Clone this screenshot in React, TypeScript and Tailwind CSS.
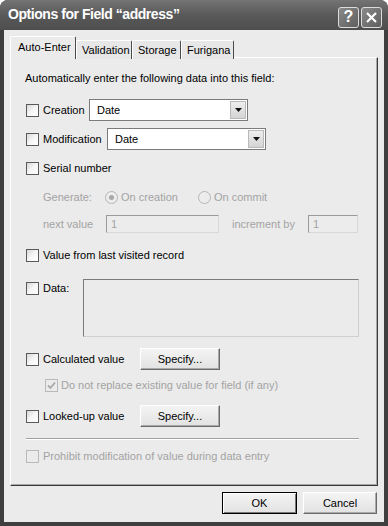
import React from "react";

const F = { fontFamily: '"Liberation Sans", Arial, sans-serif' };

function Check({ disabled = false, checked = false }: { disabled?: boolean; checked?: boolean }) {
  return (
    <div
      className={
        "w-[13px] h-[13px] shrink-0 border flex items-center justify-center " +
        (disabled
          ? "border-[#b9b9b9] bg-[#ebebeb]"
          : "border-[#5a5a5a] bg-gradient-to-br from-[#d8d8d8] via-[#f6f6f6] to-white")
      }
    >
      {checked && (
        <svg width="9" height="9" viewBox="0 0 9 9">
          <path d="M1 4.5 L3.5 7 L8 1.5" stroke={disabled ? "#a8a8a8" : "#222"} strokeWidth="1.8" fill="none" />
        </svg>
      )}
    </div>
  );
}

function Radio({ checked = false }: { checked?: boolean }) {
  return (
    <div className="w-[13px] h-[13px] shrink-0 rounded-full border border-[#b5b5b5] bg-[#ececec] flex items-center justify-center">
      {checked && <div className="w-[5px] h-[5px] rounded-full bg-[#a8a8a8]" />}
    </div>
  );
}

function Select({ w }: { w: string }) {
  return (
    <div className={"h-[22px] bg-white border border-[#7b7b7b] flex items-center justify-between pl-[7px] pr-[1px] " + w}>
      <span className="text-[11px] text-black">Date</span>
      <div className="w-[16px] h-[18px] bg-gradient-to-b from-[#eeeeee] to-[#d4d4d4] border border-[#b9b9b9] flex items-center justify-center">
        <svg width="7" height="4" viewBox="0 0 7 4">
          <path d="M0 0 H7 L3.5 4 Z" fill="#111" />
        </svg>
      </div>
    </div>
  );
}

function Btn({ label, w, def = false }: { label: string; w: string; def?: boolean }) {
  return (
    <div
      className={
        "h-[22px] flex items-center justify-center text-[11px] text-black bg-gradient-to-b from-[#f4f4f4] to-[#e2e2e2] " +
        w +
        (def
          ? " border border-black shadow-[inset_1px_1px_0_#fff,inset_-1px_-1px_0_#777]"
          : " border border-t-white border-l-white border-r-[#6a6a6a] border-b-[#6a6a6a] shadow-[inset_-1px_-1px_0_#aaa]")
      }
    >
      {label}
    </div>
  );
}

function Tab({ label, sel = false, w }: { label: string; sel?: boolean; w: string }) {
  return (
    <div
      className={
        "flex items-center whitespace-nowrap text-[11px] text-black border-l border-t border-r border-l-white border-t-white border-r-[#4a4a4a] rounded-t-[2px] " +
        w +
        (sel ? " h-[23px] bg-[#ebebeb] pl-[7px] pb-[2px] z-10" : " h-[19px] bg-[#e7e7e7] pl-[5px]")
      }
    >
      {label}
    </div>
  );
}

export default function App() {
  return (
    <div className="w-[388px] h-[526px] bg-white" style={F}>
      <div className="w-[388px] h-[526px] bg-[#3f3f3f] rounded-t-[8px] flex flex-col overflow-hidden">
        {/* Title bar */}
        <div className="h-[30px] shrink-0 bg-gradient-to-b from-[#747474] via-[#595959] to-[#4e4e4e] flex items-center pl-[8px] pr-[6px]">
          <span className="text-white font-bold text-[14px] tracking-[-0.45px] flex-1 -mt-[1px] whitespace-nowrap">
            Options for Field “address”
          </span>
          <div className="flex gap-[2px] mt-[4px]">
            <div className="w-[21px] h-[21px] rounded-[3px] border border-[#dcdcdc] bg-gradient-to-br from-[#8a8a8a] to-[#5e5e5e] flex items-center justify-center text-white font-bold text-[16px] leading-none">
              ?
            </div>
            <div className="w-[21px] h-[21px] rounded-[3px] border border-[#dcdcdc] bg-gradient-to-br from-[#8a8a8a] to-[#5e5e5e] flex items-center justify-center">
              <svg width="13" height="13" viewBox="0 0 13 13">
                <path d="M2 2 L11 11 M11 2 L2 11" stroke="#fff" strokeWidth="2.2" />
              </svg>
            </div>
          </div>
        </div>
        {/* Body */}
        <div className="flex-1 mx-[4px] mb-[4px] bg-[#ebebeb] pt-[6px] pl-[6px] flex flex-col">
          <div className="flex items-end h-[23px] -mb-[2px] relative z-10">
            <Tab label="Auto-Enter" sel w="w-[66px]" />
            <Tab label="Validation" w="w-[56px]" />
            <Tab label="Storage" w="w-[49px]" />
            <Tab label="Furigana" w="w-[53px]" />
          </div>
          <div className="w-[368px] h-[429px] border border-l-white border-t-white border-r-[#3a3a3a] border-b-[#3a3a3a] shadow-[inset_-1px_-1px_0_#a8a8a8] pl-[15px] flex flex-col text-[11px] text-black whitespace-nowrap">
            <div className="mt-[12px] h-[16px] flex items-center -ml-[1px]">
              Automatically enter the following data into this field:
            </div>
            <div className="mt-[13px] h-[22px] flex items-center">
              <Check />
              <span className="ml-[4px] w-[46px]">Creation</span>
              <Select w="w-[159px]" />
            </div>
            <div className="mt-[7px] h-[22px] flex items-center">
              <Check />
              <span className="ml-[4px] w-[64px]">Modification</span>
              <Select w="w-[159px]" />
            </div>
            <div className="mt-[10px] h-[16px] flex items-center">
              <Check />
              <span className="ml-[4px]">Serial number</span>
            </div>
            <div className="mt-[13px] h-[16px] flex items-center text-[#a3a3a3]">
              <span className="ml-[17px] w-[62px]">Generate:</span>
              <Radio checked />
              <span className="ml-[3px] w-[77px]">On creation</span>
              <Radio />
              <span className="ml-[3px]">On commit</span>
            </div>
            <div className="mt-[10px] h-[18px] flex items-center text-[#a3a3a3]">
              <span className="ml-[17px] w-[63px]">next value</span>
              <div className="w-[113px] h-[18px] border border-t-[#9a9a9a] border-l-[#9a9a9a] border-r-[#d8d8d8] border-b-[#d8d8d8] bg-[#ececec] pl-[4px] flex items-center">1</div>
              <span className="ml-[13px] w-[76px]">increment by</span>
              <div className="w-[50px] h-[18px] border border-t-[#9a9a9a] border-l-[#9a9a9a] border-r-[#d8d8d8] border-b-[#d8d8d8] bg-[#ececec] pl-[4px] flex items-center">1</div>
            </div>
            <div className="mt-[14px] h-[16px] flex items-center">
              <Check />
              <span className="ml-[4px]">Value from last visited record</span>
            </div>
            <div className="mt-[16px] h-[58px] flex items-start">
              <div className="h-[18px] flex items-center">
                <Check />
                <span className="ml-[4px] w-[40px]">Data:</span>
              </div>
              <div className="w-[276px] h-[58px] border border-t-[#7a7a7a] border-l-[#7a7a7a] border-r-[#d0d0d0] border-b-[#d0d0d0] bg-[#ebebeb]" />
            </div>
            <div className="mt-[11px] h-[22px] flex items-center">
              <Check />
              <span className="ml-[4px] w-[97px]">Calculated value</span>
              <Btn label="Specify..." w="w-[80px]" />
            </div>
            <div className="mt-[7px] h-[16px] flex items-center pl-[19px] text-[#a3a3a3]">
              <Check disabled checked />
              <span className="ml-[3px]">Do not replace existing value for field (if any)</span>
            </div>
            <div className="mt-[12px] h-[22px] flex items-center">
              <Check />
              <span className="ml-[4px] w-[97px]">Looked-up value</span>
              <Btn label="Specify..." w="w-[80px]" />
            </div>
            <div className="mt-[11px] w-[333px] h-[2px] border-t border-t-[#a0a0a0] border-b border-b-white" />
            <div className="mt-[8px] h-[16px] flex items-center text-[#a3a3a3]">
              <Check disabled />
              <span className="ml-[4px]">Prohibit modification of value during data entry</span>
            </div>
          </div>
          <div className="mt-[6px] w-[368px] flex justify-end gap-[6px] pr-[1px]">
            <Btn label="OK" w="w-[75px]" def />
            <Btn label="Cancel" w="w-[74px]" />
          </div>
        </div>
      </div>
    </div>
  );
}
